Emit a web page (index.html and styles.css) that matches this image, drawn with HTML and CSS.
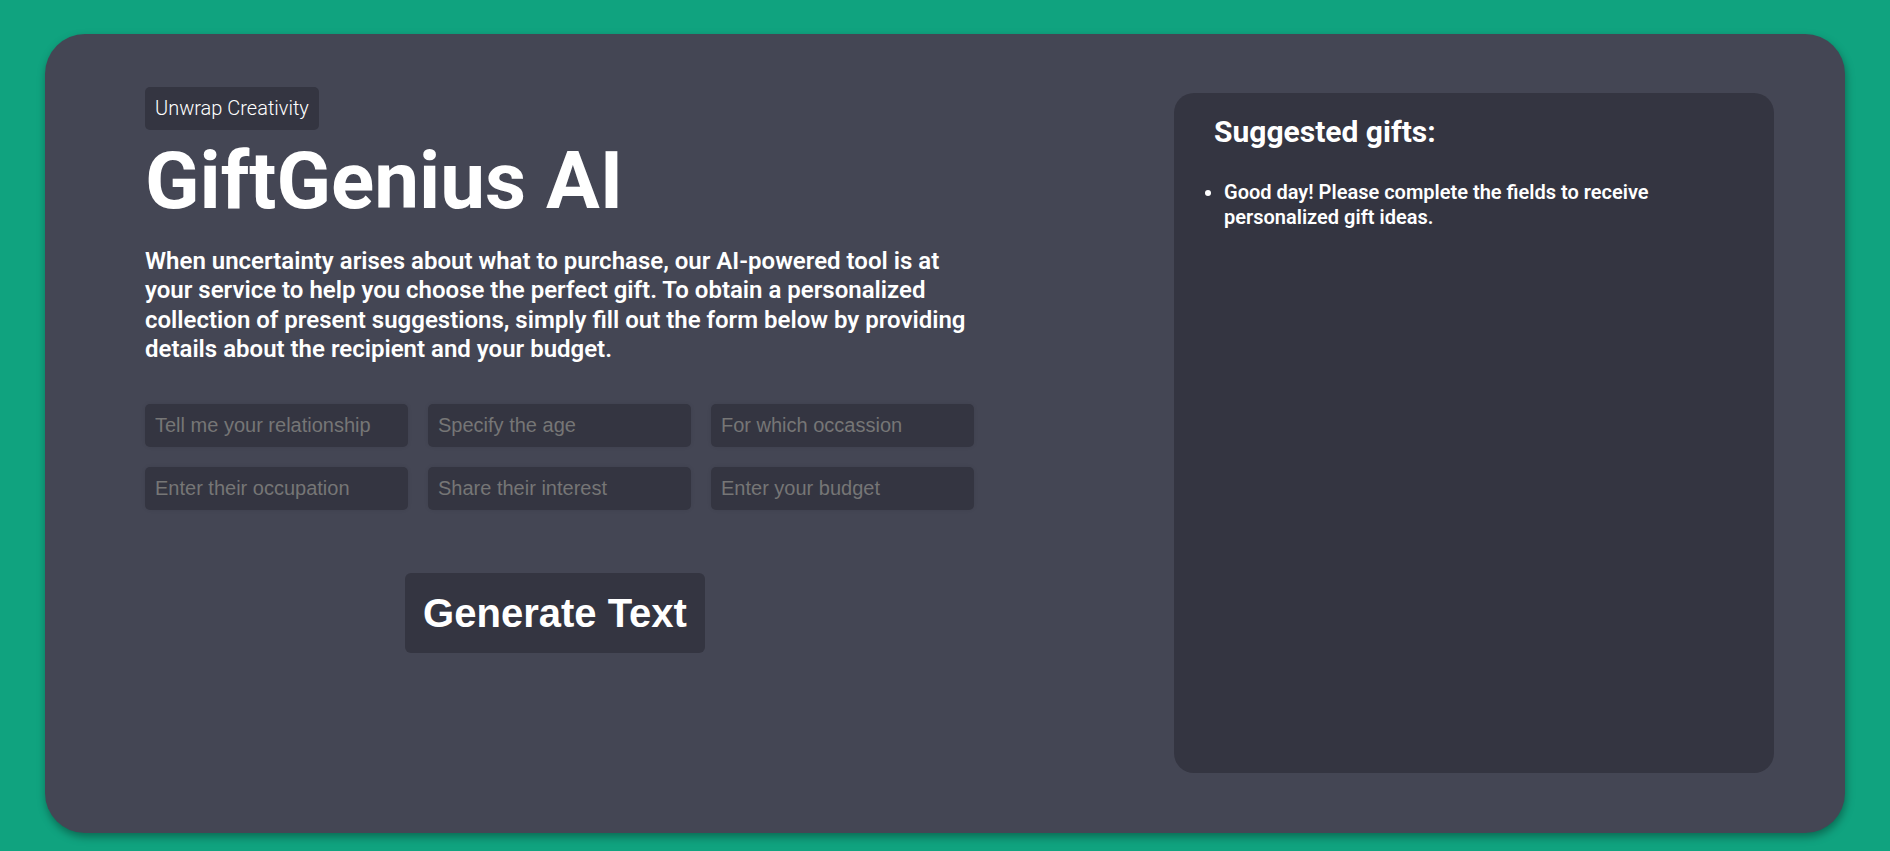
FILE: index.html
```html
<!DOCTYPE html>
<html lang="en">
<head>
<meta charset="utf-8">
<title>GiftGenius AI</title>
<link rel="stylesheet" href="styles.css">
</head>
<body>
<main class="card">
  <section class="intro">
    <span class="badge">Unwrap Creativity</span>
    <h1 class="title">GiftGenius AI</h1>
    <p class="lead">When uncertainty arises about what to purchase, our AI-powered tool is at your service to help you choose the perfect gift. To obtain a personalized collection of present suggestions, simply fill out the form below by providing details about the recipient and your budget.</p>
    <form class="form">
      <div class="fields">
        <input class="field" type="text" placeholder="Tell me your relationship">
        <input class="field" type="text" placeholder="Specify the age">
        <input class="field" type="text" placeholder="For which occassion">
        <input class="field" type="text" placeholder="Enter their occupation">
        <input class="field" type="text" placeholder="Share their interest">
        <input class="field" type="text" placeholder="Enter your budget">
      </div>
      <div class="actions">
        <button class="generate" type="button">Generate Text</button>
      </div>
    </form>
  </section>
  <aside class="results">
    <h2 class="results-title">Suggested gifts:</h2>
    <ul class="results-list">
      <li>Good day! Please complete the fields to receive personalized gift ideas.</li>
    </ul>
  </aside>
</main>
</body>
</html>
```
FILE: styles.css
```css
html, body {
  margin: 0;
  padding: 0;
}

body {
  background: #10a37f;
  font-family: Roboto, "Noto Sans", Arial, sans-serif;
  color: #ffffff;
  min-height: 851px;
  overflow: hidden;
}

.card {
  width: 1800px;
  height: 799px;
  box-sizing: border-box;
  margin: 34px auto 18px;
  background: #444654;
  border-radius: 40px;
  box-shadow: 1px 4px 8px rgba(0, 0, 0, 0.35);
  display: flex;
  align-items: flex-start;
  padding: 53px 72px 60px 100px;
  gap: 200px;
}

.intro {
  width: 829px;
  flex: 0 0 829px;
}

.badge {
  display: inline-block;
  background: #343541;
  border-radius: 5px;
  font-size: 20px;
  line-height: 23px;
  padding: 10px 10px;
  font-weight: 300;
  color: #ffffff;
}

.title {
  margin: 4px 0 0;
  font-size: 80px;
  font-weight: 700;
  line-height: 94px;
}

.lead {
  margin: 19px 0 0;
  font-size: 24px;
  line-height: 29.3px;
  font-weight: 600;
}

.form {
  margin-top: 40px;
}

.fields {
  display: grid;
  grid-template-columns: repeat(3, 263px);
  gap: 20px;
}

.field {
  height: 43px;
  box-sizing: border-box;
  background: #343541;
  border: none;
  border-radius: 5px;
  padding: 0 10px;
  font-family: "Liberation Sans", Arial, sans-serif;
  font-size: 20px;
  color: #ffffff;
  box-shadow: 0 0 4px rgba(0, 0, 0, 0.08);
  outline: none;
}

.field::placeholder {
  color: #767676;
}

.actions {
  display: flex;
  justify-content: center;
  margin-top: 63px;
  padding-right: 9px;
}

.generate {
  width: 300px;
  height: 80px;
  background: #343541;
  color: #ffffff;
  border: none;
  border-radius: 6px;
  font-family: "Liberation Sans", Arial, sans-serif;
  font-weight: 700;
  font-size: 40px;
  padding: 0;
  cursor: pointer;
}

.results {
  width: 600px;
  flex: 0 0 600px;
  height: 680px;
  box-sizing: border-box;
  margin-top: 6px;
  background: #343541;
  border-radius: 20px;
  padding: 21px 40px;
}

.results-title {
  margin: 0;
  font-size: 30px;
  font-weight: 700;
  line-height: 35px;
}

.results-list {
  margin: 31px 0 0;
  padding-left: 10px;
  font-size: 20px;
  line-height: 25px;
  font-weight: 600;
}
```
